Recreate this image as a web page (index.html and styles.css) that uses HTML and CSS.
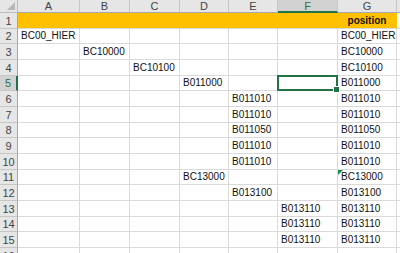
FILE: index.html
```html
<!DOCTYPE html>
<html lang="en">

<head>
    <meta charset="UTF-8">
    <title>Sheet1</title>
    <link rel="stylesheet" href="styles.css">
</head>

<body>
    <div class="sheet">
        <!-- column headers -->
        <div class="corner"><span class="all"></span></div>
        <div class="col">A</div>
        <div class="col">B</div>
        <div class="col">C</div>
        <div class="col">D</div>
        <div class="col">E</div>
        <div class="col active">F</div>
        <div class="col">G</div>
        <div class="col"></div>

        <div class="row">1</div>
        <div class="c fill"></div>
        <div class="c fill"></div>
        <div class="c fill"></div>
        <div class="c fill"></div>
        <div class="c fill"></div>
        <div class="c fill"></div>
        <div class="c fill title">position</div>
        <div class="c"></div>

        <div class="row">2</div>
        <div class="c">BC00_HIER</div>
        <div class="c"></div>
        <div class="c"></div>
        <div class="c"></div>
        <div class="c"></div>
        <div class="c"></div>
        <div class="c">BC00_HIER</div>
        <div class="c"></div>

        <div class="row">3</div>
        <div class="c"></div>
        <div class="c">BC10000</div>
        <div class="c"></div>
        <div class="c"></div>
        <div class="c"></div>
        <div class="c"></div>
        <div class="c">BC10000</div>
        <div class="c"></div>

        <div class="row">4</div>
        <div class="c"></div>
        <div class="c"></div>
        <div class="c">BC10100</div>
        <div class="c"></div>
        <div class="c"></div>
        <div class="c"></div>
        <div class="c">BC10100</div>
        <div class="c"></div>

        <div class="row active">5</div>
        <div class="c"></div>
        <div class="c"></div>
        <div class="c"></div>
        <div class="c">B011000</div>
        <div class="c"></div>
        <div class="c selected"></div>
        <div class="c">B011000</div>
        <div class="c"></div>

        <div class="row">6</div>
        <div class="c"></div>
        <div class="c"></div>
        <div class="c"></div>
        <div class="c"></div>
        <div class="c">B011010</div>
        <div class="c"></div>
        <div class="c">B011010</div>
        <div class="c"></div>

        <div class="row">7</div>
        <div class="c"></div>
        <div class="c"></div>
        <div class="c"></div>
        <div class="c"></div>
        <div class="c">B011010</div>
        <div class="c"></div>
        <div class="c">B011010</div>
        <div class="c"></div>

        <div class="row">8</div>
        <div class="c"></div>
        <div class="c"></div>
        <div class="c"></div>
        <div class="c"></div>
        <div class="c">B011050</div>
        <div class="c"></div>
        <div class="c">B011050</div>
        <div class="c"></div>

        <div class="row">9</div>
        <div class="c"></div>
        <div class="c"></div>
        <div class="c"></div>
        <div class="c"></div>
        <div class="c">B011010</div>
        <div class="c"></div>
        <div class="c">B011010</div>
        <div class="c"></div>

        <div class="row">10</div>
        <div class="c"></div>
        <div class="c"></div>
        <div class="c"></div>
        <div class="c"></div>
        <div class="c">B011010</div>
        <div class="c"></div>
        <div class="c">B011010</div>
        <div class="c"></div>

        <div class="row">11</div>
        <div class="c"></div>
        <div class="c"></div>
        <div class="c"></div>
        <div class="c">BC13000</div>
        <div class="c"></div>
        <div class="c"></div>
        <div class="c flag">BC13000</div>
        <div class="c"></div>

        <div class="row">12</div>
        <div class="c"></div>
        <div class="c"></div>
        <div class="c"></div>
        <div class="c"></div>
        <div class="c">B013100</div>
        <div class="c"></div>
        <div class="c">B013100</div>
        <div class="c"></div>

        <div class="row">13</div>
        <div class="c"></div>
        <div class="c"></div>
        <div class="c"></div>
        <div class="c"></div>
        <div class="c"></div>
        <div class="c">B013110</div>
        <div class="c">B013110</div>
        <div class="c"></div>

        <div class="row">14</div>
        <div class="c"></div>
        <div class="c"></div>
        <div class="c"></div>
        <div class="c"></div>
        <div class="c"></div>
        <div class="c">B013110</div>
        <div class="c">B013110</div>
        <div class="c"></div>

        <div class="row">15</div>
        <div class="c"></div>
        <div class="c"></div>
        <div class="c"></div>
        <div class="c"></div>
        <div class="c"></div>
        <div class="c">B013110</div>
        <div class="c">B013110</div>
        <div class="c"></div>

        <div class="row">16</div>
        <div class="c"></div>
        <div class="c"></div>
        <div class="c"></div>
        <div class="c"></div>
        <div class="c"></div>
        <div class="c"></div>
        <div class="c"></div>
        <div class="c"></div>
    </div>
</body>

</html>
```

FILE: styles.css
```css
* {
    padding: 0;
    margin: 0;
    box-sizing: border-box;
}

body {
    background-color: #fff;
    overflow: hidden;
    font-family: "Liberation Sans", Arial, sans-serif;
}

.sheet {
    width: 400px;
    display: grid;
    grid-template-columns: 18px 62px 50px 50px 49px 49px 60px 59px 1fr;
    grid-template-rows: 13px;
    grid-auto-rows: 15.67px;
}

/* headers */

.corner {
    background-color: #e6e6e6;
    border-right: 1px solid #bcbcbc;
    border-bottom: 1px solid #bcbcbc;
    display: flex;
    justify-content: flex-end;
    align-items: flex-end;
    padding: 0 2px 2px 0;
}

.all {
    width: 0;
    height: 0;
    border-left: 8px solid transparent;
    border-bottom: 8px solid #b8b8b8;
}

.col {
    background-color: #e6e6e6;
    border-right: 1px solid #c6c6c6;
    border-bottom: 1px solid #a8a8a8;
    color: #444;
    font-size: 11px;
    line-height: 12px;
    text-align: center;
}

.col.active {
    background-color: #d2d2d2;
    color: #217346;
    border-bottom: 2px solid #217346;
}

.row {
    background-color: #e6e6e6;
    border-right: 1px solid #a8a8a8;
    border-bottom: 1px solid #c6c6c6;
    color: #444;
    font-size: 11px;
    display: flex;
    align-items: flex-end;
    justify-content: center;
    padding-bottom: 1px;
}

.row.active {
    background-color: #d2d2d2;
    color: #217346;
    border-right: 2px solid #217346;
}

/* cells */

.c {
    position: relative;
    border-right: 1px solid #dadada;
    border-bottom: 1px solid #dadada;
    font-size: 10px;
    color: #111;
    white-space: nowrap;
    display: flex;
    align-items: flex-end;
    padding: 0 0 2px 3px;
}

.fill {
    background-color: #ffc000;
    border-right-color: #ffc000;
}

.title {
    font-weight: bold;
    justify-content: center;
    padding-left: 0;
}

.selected::after {
    content: "";
    position: absolute;
    top: -1px;
    left: -1px;
    right: -1px;
    bottom: -1px;
    border: 2px solid #217346;
}

.selected::before {
    content: "";
    position: absolute;
    right: -3px;
    bottom: -3px;
    width: 5px;
    height: 5px;
    background-color: #217346;
    border: 1px solid #fff;
    z-index: 1;
}

.flag::before {
    content: "";
    position: absolute;
    top: 0;
    left: 0;
    border-top: 5px solid #1e8c45;
    border-right: 5px solid transparent;
}
```
